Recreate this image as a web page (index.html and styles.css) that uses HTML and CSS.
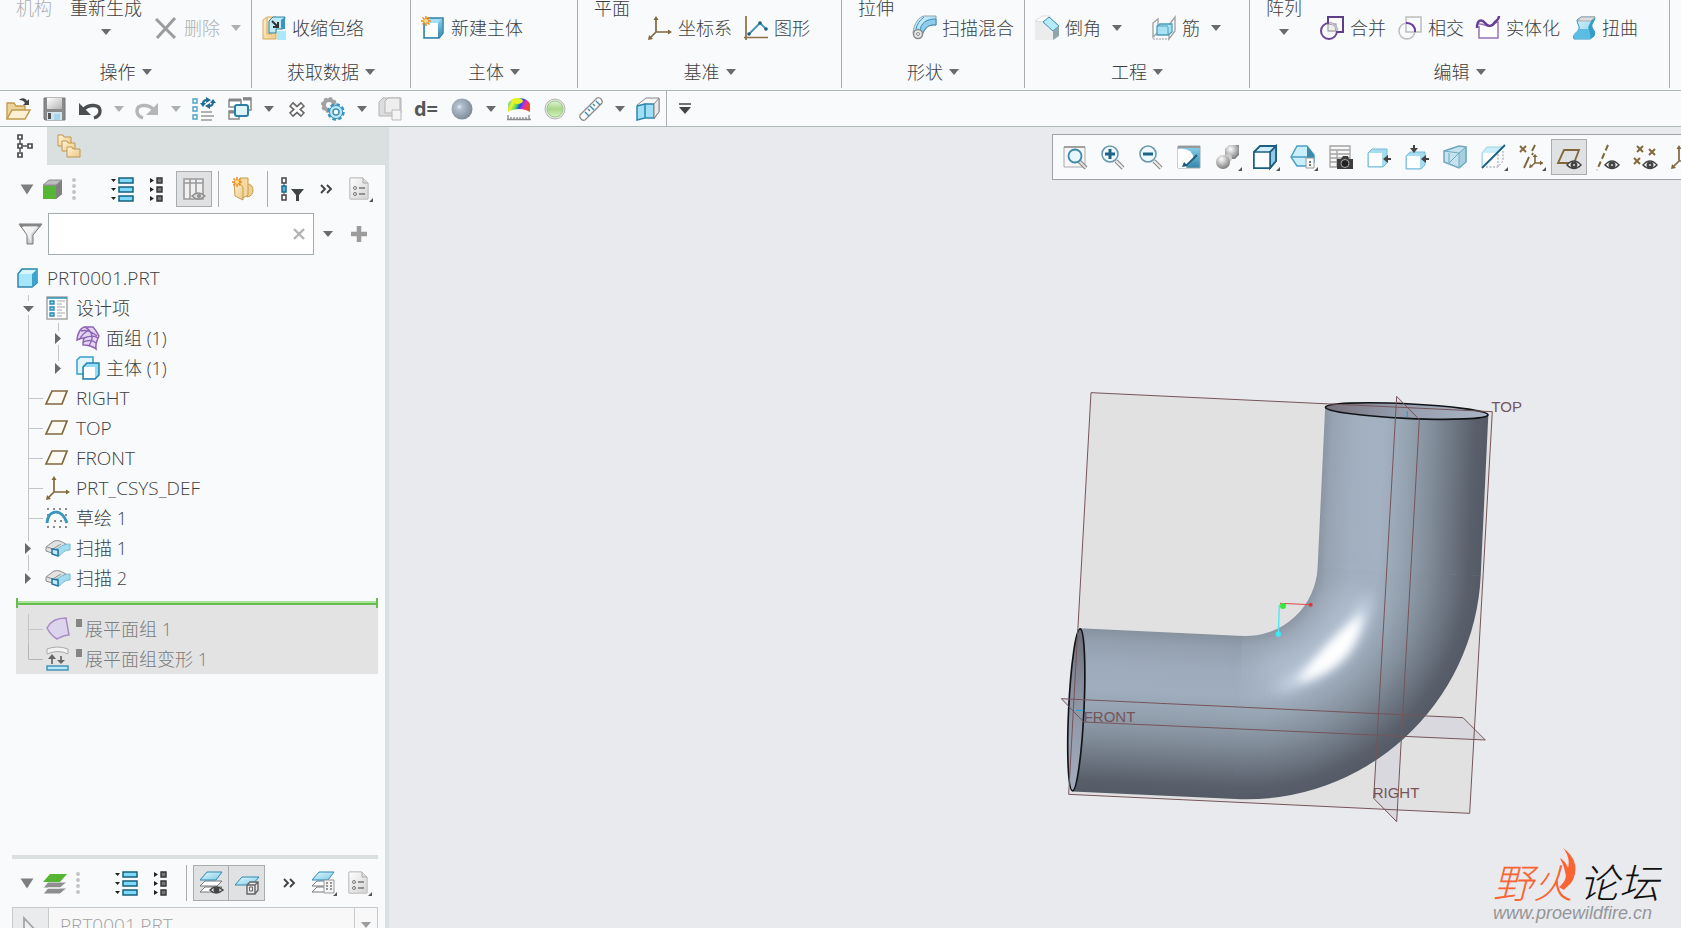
FILE: index.html
```
<!DOCTYPE html>
<html lang="zh-CN">
<head>
    <meta charset="UTF-8">
    <meta name="viewport" content="width=device-width, initial-scale=1.0">
    <title>PRT0001</title>
    <link rel="stylesheet" href="styles.css">
</head>
<body>

    <!-- Icons -->
    <svg class="sprite" width="0" height="0" aria-hidden="true">
        <defs>
            <linearGradient id="gBlue" x1="0" y1="0" x2="1" y2="1"><stop offset="0" stop-color="#e4f8ff"/><stop offset="1" stop-color="#7ccbe8"/></linearGradient>
            <linearGradient id="gSide" x1="0" y1="0" x2="0" y2="1"><stop offset="0" stop-color="#8fd3ec"/><stop offset="1" stop-color="#2f86ad"/></linearGradient>
            <linearGradient id="gTan" x1="0" y1="0" x2="1" y2="1"><stop offset="0" stop-color="#fff3d6"/><stop offset="1" stop-color="#ecc987"/></linearGradient>
            <linearGradient id="gGrey" x1="0" y1="0" x2="1" y2="1"><stop offset="0" stop-color="#ffffff"/><stop offset="1" stop-color="#b4b4b4"/></linearGradient>
            <radialGradient id="gBall" cx=".38" cy=".4" r=".65"><stop offset="0" stop-color="#e6edf5"/><stop offset=".2" stop-color="#b2bfcd"/><stop offset="1" stop-color="#7d8997"/></radialGradient>
            <radialGradient id="gBall2" cx=".4" cy=".3" r=".7"><stop offset="0" stop-color="#fff"/><stop offset="1" stop-color="#7d7d7d"/></radialGradient>
            <linearGradient id="gGreen" x1="0" y1="0" x2="0" y2="1"><stop offset="0" stop-color="#e1f3d3"/><stop offset=".5" stop-color="#a9d68c"/><stop offset="1" stop-color="#d3f2c0"/></linearGradient>
            <linearGradient id="gRain" x1="0" y1="0" x2="1" y2=".3"><stop offset="0" stop-color="#18c0d8"/><stop offset=".3" stop-color="#f7f02a"/><stop offset=".5" stop-color="#3fe05a"/><stop offset=".65" stop-color="#2848e8"/><stop offset=".8" stop-color="#d22ad0"/><stop offset="1" stop-color="#f04a1c"/></linearGradient>
        </defs>

        <symbol id="i-delete" viewBox="0 0 24 24"><path d="M2 3l19 19M21 2L3 22" stroke="#9c9c9c" stroke-width="3" fill="none"/></symbol>
        <symbol id="i-shrink" viewBox="0 0 24 24"><path d="M1 4l4-3h9v22H1z" fill="url(#gTan)" stroke="#d9a957"/><path d="M5 2v16h5" fill="none" stroke="#d9a957"/><path d="M7 5l4-4h12l-2 12h-7v4H7z" fill="#bfeaf8" stroke="#2d84a8"/><path d="M19 4l4-3v12h-4z" fill="#3b96bd"/><path d="M10 5l6 6m0-5v5h-5" stroke="#333" stroke-width="2" fill="none"/><path d="M15 15h9v9h-9z" fill="#a8e8fa"/></symbol>
        <symbol id="i-newbody" viewBox="0 0 24 24"><path d="M3 7l4-5h15v15l-4 5H3z" fill="#a5dff2" stroke="#2d7fa3" stroke-width="1.5"/><path d="M17 7l4-5v15l-4 5z" fill="url(#gSide)"/><path d="M4 7h13v14H4z" fill="#fff"/><path d="M5 0v10M0 5h10M1.500 1.500l7 7M8.500 1.500l-7 7" stroke="#f08a1d" stroke-width="1.500"/><circle cx="5" cy="5" r="2" fill="#ffe08a"/></symbol>
        <symbol id="i-csys" viewBox="0 0 24 24"><path d="M8 3v13h13M8 16l-6 6" stroke="#80683c" stroke-width="1.700" fill="none"/><path d="M5.500 4L8 0l2.500 4zM20 13.500l4 2.500-4 2.500zM0 24l1-5 4 4z" fill="#80683c"/></symbol>
        <symbol id="i-graph" viewBox="0 0 24 24"><path d="M2 0v24M0 21.500h24" stroke="#8a7044" stroke-width="1.700"/><path d="M5 18L16 7l6 6" fill="none" stroke="#3d93b8" stroke-width="1.800"/><circle cx="5" cy="18" r="1.800" fill="#1d5f82"/><circle cx="16" cy="7" r="1.800" fill="#1d5f82"/><circle cx="22" cy="13" r="1.800" fill="#1d5f82"/></symbol>
        <symbol id="i-sweepblend" viewBox="0 0 24 24"><path d="M1 17C2 7 7 1 12 0h12v9c-8 0-10 2-14 10z" fill="url(#gBlue)" stroke="#8ba3ad"/><path d="M24 9c-7-1-11 2-14 10l-2-4C9 7 14 3 24 3z" fill="#8fcdea" stroke="#3b8db5"/><path d="M12 1C8 4 5 8 4 13" fill="none" stroke="#3b8db5"/><circle cx="6" cy="18" r="4.500" fill="#e8e8e8" stroke="#888" stroke-width="1.500"/><circle cx="6" cy="18" r="1.500" fill="#fff" stroke="#888"/></symbol>
        <symbol id="i-chamfer" viewBox="0 0 24 24"><path d="M0 6l7-6h8l9 10v10l-6 4H0z" fill="#ececec"/><path d="M0 5l7-5h8l-6 6z" fill="#fff" stroke="#ddd"/><path d="M8 6l6-5 10 9-6 5z" fill="#b4ecfb" stroke="#3390b5"/><path d="M18 15l6-5v10l-6 4z" fill="#8fa6ad"/></symbol>
        <symbol id="i-rib" viewBox="0 0 24 24"><path d="M1 7l5-4v13l-5 5zM17 9l6-8v14l-6 8z" fill="#fafafa" stroke="#a3a3a3" stroke-width="1.400"/><path d="M1 23h16" stroke="#999" stroke-dasharray="2 1"/><path d="M5 10l3-2h12v8l-4 3H5z" fill="#a7e2f5" stroke="#4f9cba" stroke-width="1.300"/><path d="M16 11v8M5 10h11" stroke="#4f9cba"/></symbol>
        <symbol id="i-merge" viewBox="0 0 24 24"><path d="M8 8v7h8V8z" fill="#eee" stroke="#aaa" stroke-width="1.300"/><path d="M8 7V1h15v15h-6" fill="none" stroke="#5f3d87" stroke-width="2"/><circle cx="9" cy="15" r="8" fill="none" stroke="#6b4897" stroke-width="2"/><path d="M9 7a8 8 0 0 1 8 8" fill="none" stroke="#c9c6cc" stroke-width="2"/></symbol>
        <symbol id="i-intersect" viewBox="0 0 24 24"><path d="M8 8V1h15v15H8z" fill="none" stroke="#bdbdbd" stroke-width="1.500"/><circle cx="9" cy="15" r="8" fill="none" stroke="#bdbdbd" stroke-width="1.500"/><path d="M8 7a8 8 0 0 1 9 9" fill="none" stroke="#6a3f9a" stroke-width="2"/></symbol>
        <symbol id="i-solidify" viewBox="0 0 24 24"><path d="M3 10v12h19V6c-3 0-6 4-9 4S8 8 3 8" fill="#fff" stroke="#9673bb" stroke-width="1.500"/><path d="M1 12C1 3 6 3 9 7s7 4 10-1c2-2 4-2 4-6" fill="none" stroke="#663e94" stroke-width="2.500"/></symbol>
        <symbol id="i-warp" viewBox="0 0 24 24"><path d="M5 4l4-3h14c0 4-5 6-3 10 1 3 4 4 2 9l-4 3H2c-2-5 4-7 5-10S5 8 5 4z" fill="url(#gBlue)" stroke="#2e93bd"/><path d="M2 22c-1-4 4-6 5-9h12c0 3 2 5 1 8l-2 2H3z" fill="#5dbce2"/><path d="M6 5l3-4h14l-4 4z" fill="#ddd" stroke="#aaa"/><path d="M19 5c-1 4-4 5-2 9 1 3 2 5 1 9l4-3c2-5-2-6-2-9s3-6 3-9z" fill="#319dcb"/></symbol>

        <symbol id="i-open" viewBox="0 0 24 24"><path d="M1 22V6h7l2 3h9v4" fill="#ecd39a" stroke="#c19a4c" stroke-width="1.300"/><path d="M1 22l5-9h18l-5 9z" fill="#fdf1d3" stroke="#c19a4c" stroke-width="1.500"/><path d="M13 3c3-3 7-2 8 1l2-2v6h-6l2-2c-1-2-3-3-6-3z" fill="#444"/></symbol>
        <symbol id="i-save" viewBox="0 0 24 24"><path d="M2 1h21v22H3l-1-1z" fill="#8a8a8a" stroke="#777"/><path d="M5 1h15v11H5z" fill="url(#gGrey)"/><path d="M5 15h15v8H5z" fill="#cfe5f1"/><path d="M6 16h3v6H6z" fill="#555"/><path d="M12 17h6v6h-6z" fill="#a9d4ea"/></symbol>
        <symbol id="i-undo" viewBox="0 0 24 24"><path d="M6 12c5-5 16-5 16 2 0 4-3 6-6 7" fill="none" stroke="#4b4f52" stroke-width="3.400"/><path d="M1 6v12h12z" fill="#4b4f52"/></symbol>
        <symbol id="i-redo" viewBox="0 0 24 24"><path d="M18 12C13 7 2 7 2 14c0 4 3 6 6 7" fill="none" stroke="#b4b6b8" stroke-width="3.400"/><path d="M23 6v12H11z" fill="#b4b6b8"/></symbol>
        <symbol id="i-regen" viewBox="0 0 24 24"><path d="M1 2h4v4H1zM1 10h4v4H1zM1 18h4v4H1z" fill="#fff" stroke="#4aa3c8" stroke-width="1.400"/><path d="M9 15h11M9 19h13M9 23h11" stroke="#999" stroke-width="1.700"/><path d="M11 7c0-3 2-4 4-4M21 5c0 3-2 4-4 4" stroke="#1e6d93" stroke-width="2.200" fill="none"/><path d="M14 0l5 3-5 3zM18 6l-5 3 5 3zM8 6h6l-3 4zM18 6h6l-3-4z" fill="#1e6d93"/></symbol>
        <symbol id="i-windows" viewBox="0 0 24 24"><path d="M1 3h12v7H1zM15 1h8v12h-8M1 14h10v8H1z" fill="#fff" stroke="#888" stroke-width="1.500"/><path d="M1 3h12M15 2h8M1 15h10" stroke="#888" stroke-width="3"/><rect x="7" y="8" width="13" height="11" rx="2" fill="#dff5fc" stroke="#2b7fa6" stroke-width="2"/></symbol>
        <symbol id="i-close" viewBox="0 0 24 24"><path d="M6 7l12 11M18 7L6 18" stroke="#666" stroke-width="6"/><path d="M7 8l10 9M17 8L7 17" stroke="#fff" stroke-width="2.800"/></symbol>
        <symbol id="i-gears" viewBox="0 0 24 24"><circle cx="8" cy="8" r="5" fill="none" stroke="#a2a2a2" stroke-width="4"/><circle cx="8" cy="8" r="7" fill="none" stroke="#a2a2a2" stroke-width="2" stroke-dasharray="3 2.500"/><circle cx="15" cy="15" r="7.500" fill="#bdeafa" stroke="#3c92ba" stroke-width="2.500" stroke-dasharray="3.500 2.400"/><circle cx="15" cy="15" r="6.500" fill="#bdeafa" stroke="#3c92ba"/><circle cx="15" cy="15" r="3" fill="#fff" stroke="#3c92ba" stroke-width="1.500"/></symbol>
        <symbol id="i-copygrey" viewBox="0 0 24 24"><path d="M1 5l4-4h18v15h-3v3H1z" fill="#dcdddd" stroke="#b3b3b3"/><path d="M7 4l3-3h12v12l-3 3H7z" fill="#eee" stroke="#b3b3b3"/><path d="M14 13h9v10h-9z" fill="#f4f4f4" stroke="#b8b8b8"/></symbol>
        <symbol id="i-ball" viewBox="0 0 24 24"><circle cx="12" cy="12" r="10.500" fill="url(#gBall)"/></symbol>
        <symbol id="i-rainbow" viewBox="0 0 24 24"><path d="M1 15V7c3-8 19-8 22 0v8c-6-4-16-4-22 0z" fill="url(#gRain)"/><ellipse cx="10" cy="4" rx="6" ry="3" fill="#e6f32a"/><path d="M0 22.500h24M1 18v4M4 20v2M7 20v2M10 20v2M13 20v2M16 20v2M19 20v2M22 18v4" stroke="#8a8a8a" stroke-width="1.300"/></symbol>
        <symbol id="i-green" viewBox="0 0 24 24"><circle cx="12" cy="12" r="10" fill="#e8e8e8" stroke="#b5b5b5"/><circle cx="12" cy="12" r="8" fill="url(#gGreen)" stroke="#9cc986"/></symbol>
        <symbol id="i-ruler" viewBox="0 0 24 24"><path d="M1 18L18 1q2-1 4 1t1 4L6 23q-2 1-4-1t-1-4z" fill="#fcfcfc" stroke="#8d8d8d" stroke-width="1.300"/><path d="M6 15l4 4M9 12l2 2M11 9l4 4M14 7l2 2M17 4l4 4" stroke="#3a8eb5" stroke-width="1.400"/></symbol>
        <symbol id="i-sections" viewBox="0 0 24 24"><path d="M1 8l9-7h13v14l-5 7" fill="#f6f6f6" stroke="#888"/><path d="M1 9l8-2v14l-8 2zM9 7h9v14H9z" fill="#9fe0f7" stroke="#2b86ae" stroke-width="1.500"/><path d="M18 7l5-6v14l-5 6z" fill="#e9e9e9" stroke="#888"/></symbol>
        <symbol id="i-more" viewBox="0 0 24 24"><path d="M6 7h12" stroke="#444" stroke-width="1.500"/><path d="M6 10h12l-6 7z" fill="#444"/></symbol>

        <symbol id="i-tree" viewBox="0 0 24 24"><path d="M6 6v12M9 12h4" stroke="#555" stroke-width="1.500"/><path d="M4 1h4v4H4zM4 10h4v4H4zM14 10h4v4h-4zM4 19h4v4H4z" fill="#fff" stroke="#4a4a4a" stroke-width="1.700"/></symbol>
        <symbol id="i-folders" viewBox="0 0 24 24"><g fill="url(#gTan)" stroke="#bd9750"><path d="M1 1h5l1 2h7v9H1z"/><path d="M5 7h5l1 2h7v8H5z"/><path d="M10 13h5l1 2h7v8H10z"/></g></symbol>
        <symbol id="i-cube" viewBox="0 0 24 24"><path d="M1 9l6-6h13v14l-6 5" fill="#8e8e8e"/><path d="M1 8l6-5h13l-6 5z" fill="#bdbdbd" stroke="#8e8e8e"/><path d="M1 9h13v13H1z" fill="#55b535"/><path d="M14 9l6-6v14l-6 5z" fill="#808080"/></symbol>
        <symbol id="i-expand" viewBox="0 0 24 24"><path d="M9 1h14v5H9zM9 10h14v5H9zM9 19h14v5H9z" fill="#7ed9fb" stroke="#17607f" stroke-width="1.500"/><path d="M1 2h5L3.500 5zM1 11h5l-2.500 3zM1 20h5l-2.500 3z" fill="#222"/></symbol>
        <symbol id="i-collapse" viewBox="0 0 24 24"><path d="M11 1h5v5h-5zM11 10h5v5h-5zM11 19h5v5h-5z" fill="#777" stroke="#333" stroke-width="1.400"/><path d="M4 1v5l4-2.500zM4 10v5l4-2.500zM4 19v5l4-2.500z" fill="#222"/></symbol>
        <symbol id="i-columns" viewBox="0 0 24 24"><path d="M2 2h19v20H2zM2 6h19M8 2v20M14 2v20" fill="#f0f0f0" stroke="#9a9a9a" stroke-width="1.600"/><path d="M10 19q6-6 13 0-7 6-13 0z" fill="#dcdcdc" stroke="#8f8f8f" stroke-width="1.500"/><circle cx="17" cy="19" r="2" fill="#8f8f8f"/></symbol>
        <symbol id="i-newgroup" viewBox="0 0 24 24"><path d="M16 7q6 0 6 6t-6 7z" fill="#efcf91" stroke="#c79c4b"/><path d="M9 1h8v17l-5 3-3-3z" fill="#f4d9a0" stroke="#c79c4b"/><path d="M3 5l6 2 3 3v13L4 19z" fill="url(#gTan)" stroke="#c79c4b"/><path d="M6 0v10M1 5h10M2.500 1.500l7 7M9.500 1.500l-7 7" stroke="#f08a1d" stroke-width="1.500"/><circle cx="6" cy="5" r="2" fill="#ffe08a"/></symbol>
        <symbol id="i-treefilter" viewBox="0 0 24 24"><path d="M4 5v14" stroke="#555"/><path d="M2 1h4v5H2zM2 18h4v5H2z" fill="#fff" stroke="#444" stroke-width="1.500"/><path d="M2 9h4v6H2z" fill="#58b5dc" stroke="#1d6a8f" stroke-width="1.500"/><path d="M11 12h13l-5 6v6h-3v-6z" fill="#444"/></symbol>
        <symbol id="i-chevrons" viewBox="0 0 24 24"><path d="M7 8l4 4-4 4M13 8l4 4-4 4" fill="none" stroke="#444" stroke-width="1.900"/></symbol>
        <symbol id="i-doc" viewBox="0 0 24 24"><path d="M2 1h13l5 5v16H2z" fill="url(#gGrey)" stroke="#a0a0a0"/><path d="M2 1h13l5 5v16H2z" fill="#fff" fill-opacity=".4"/><path d="M15 1v5h5" fill="#ddd" stroke="#aaa"/><circle cx="7" cy="11" r="1.500" fill="none" stroke="#777"/><circle cx="7" cy="17" r="1.500" fill="none" stroke="#777"/><path d="M11 11h6M11 17h6" stroke="#777" stroke-width="1.300"/><path d="M25 21v4h-4z" fill="#555"/></symbol>
        <symbol id="i-funnel" viewBox="0 0 24 24"><path d="M1 2h23l-9 11v9H9v-9z" fill="url(#gGrey)" stroke="#777"/><path d="M1 2h23l-2 3H3z" fill="#868686"/><path d="M5 4h15l-7 8v9" fill="#fff" fill-opacity=".6"/></symbol>
        <symbol id="i-x" viewBox="0 0 24 24"><path d="M7 7l10 10M17 7L7 17" stroke="#b3b3b3" stroke-width="2.400"/></symbol>
        <symbol id="i-plus" viewBox="0 0 24 24"><path d="M12 4v16M4 12h16" stroke="#9c9c9c" stroke-width="4.500"/></symbol>
        <symbol id="i-caret" viewBox="0 0 24 24"><path d="M5 7h14l-7 11z" fill="#7e7e7e"/></symbol>

        <symbol id="i-part" viewBox="0 0 24 24"><path d="M1 8l4-5h15v14l-5 4H1z" fill="#a6e6fa" stroke="#2f85ab" stroke-width="1.500"/><path d="M15 8l5-5v14l-5 4z" fill="#3fa3cf"/><path d="M2 8l4-4h13l-4 4z" fill="#d8f5fd"/></symbol>
        <symbol id="i-items" viewBox="0 0 24 24"><path d="M1 1h20v22H1z" fill="#fff" stroke="#a5a5a5" stroke-width="1.500"/><path d="M1 2h20" stroke="#3793bb" stroke-width="1.600"/><path d="M4 5h4v3H4zM4 11h4v3H4zM4 17h4v3H4z" fill="#9edcf2" stroke="#2687b3" stroke-width="1.300"/><path d="M11 5h8M11 8h5M11 11h8M11 14h5M11 17h8M11 20h5" stroke="#a5a5a5"/></symbol>
        <symbol id="i-quilt" viewBox="0 0 24 24"><path d="M1 14C1 8 5 1 9 1h8c3 3 5 7 6 9-2 4-4 8-3 13-5-4-9-4-13-4 0-3 0-5 1-7-3 0-5 1-7 2z" fill="#e3d5f1" stroke="#8e65b4" stroke-width="1.500"/><path d="M5 5c6-2 11 1 16 5M9 1c4 2 6 5 7 9s-2 7-3 10M8 12c5-2 10-3 14 0M7 16c5-2 10-2 13 1M13 4c-5 3-8 6-9 9" fill="none" stroke="#8e65b4" stroke-width="1.400"/></symbol>
        <symbol id="i-bodies" viewBox="0 0 24 24"><path d="M1 4l3-3h13v14l-3 3H1z" fill="#dff6fd" stroke="#3a9dc6" stroke-width="1.500"/><path d="M7 11l4-4h12v12l-4 4H7z" fill="#8fdcf5" stroke="#2580a8" stroke-width="1.500"/><path d="M8 11h11v11H8z" fill="#fff"/></symbol>
        <symbol id="i-plane" viewBox="0 0 24 24"><path d="M6 5h15l-5 13H0z" fill="#fcfaf5" stroke="#80683c" stroke-width="1.700"/></symbol>
        <symbol id="i-sketch" viewBox="0 0 24 24"><g fill="#8c8c8c"><path d="M1 2h2v2H1zM7 2h2v2H7zM13 2h2v2h-2zM19 2h2v2h-2zM1 8h2v2H1zM19 8h2v2h-2zM8 14h2v2H8zM14 14h2v2h-2zM1 20h2v2H1zM7 20h2v2H7zM13 20h2v2h-2zM19 20h2v2h-2z"/></g><path d="M1 17C2 3 16 2 21 17" fill="none" stroke="#3796bd" stroke-width="3"/></symbol>
        <symbol id="i-sweep" viewBox="0 0 24 24"><path d="M0 11l8-6q4-1 6 0l6 3-6 4-8 5-6-2z" fill="#e2e2e2" stroke="#8d8d8d"/><path d="M1 11l6 2 8-5" fill="none" stroke="#8d8d8d"/><path d="M10 13c4-1 6-5 14-5v6c-6 0-7 3-11 6l-1-6z" fill="#a3dbef" stroke="#76b8d2"/><path d="M6 13l6 1v6l-6-2z" fill="#c2ecf9" stroke="#24749a" stroke-width="1.500"/></symbol>
        <symbol id="i-flatten" viewBox="0 0 24 24"><path d="M1 11C4 5 9 1 20 1l3 17c-5 0-8 2-12 4C6 19 3 15 1 11z" fill="#dcd4ec" stroke="#a88bc6" stroke-width="1.500"/></symbol>
        <symbol id="i-deform" viewBox="0 0 24 24"><path d="M1 7V2q10-4 21 0v5q-10-5-21 0z" fill="#f2f2f2" stroke="#aaa"/><path d="M6 17V10M15 9v7" stroke="#666" stroke-width="1.700"/><path d="M2 12l4-5 4 5zM11 13l4 4 4-4z" fill="#666"/><path d="M1 19h21v4H1z" fill="#b5e8f9" stroke="#4792b3" stroke-width="1.500"/></symbol>

        <!-- Tree connector lines -->
        <symbol id="l-tee" viewBox="0 0 30 30"><path d="M15.500 0v30M15 15.500h15" stroke="#c3c6c8" fill="none"/></symbol>
        <symbol id="l-end" viewBox="0 0 30 30"><path d="M15.500 0v15.500h14.500" stroke="#b5b5b5" fill="none"/></symbol>
        <symbol id="l-line" viewBox="0 0 30 30"><path d="M15.500 0v30" stroke="#c3c6c8" fill="none"/></symbol>
        <symbol id="l-open" viewBox="0 0 30 30"><path d="M15.500 2v6M15.500 22v8" stroke="#c3c6c8"/><path d="M10 13h11l-5.500 6z" fill="#6a6a6a"/></symbol>
        <symbol id="l-closed" viewBox="0 0 30 30"><path d="M15.500 0v8M15.500 22v8" stroke="#c3c6c8"/><path d="M12 10v11l6-5.500z" fill="#6a6a6a"/></symbol>
        <symbol id="l-last" viewBox="0 0 30 30"><path d="M15.500 0v8" stroke="#c3c6c8"/><path d="M12 10v11l6-5.500z" fill="#6a6a6a"/></symbol>

        <symbol id="i-layers" viewBox="0 0 24 24"><path d="M1 23l5-6h19l-7 6zM1 17l5-6h19l-7 6z" fill="#8e8e8e" stroke="#f7f9fb"/><path d="M1 11l7-8h17l-7 8z" fill="#55b535"/></symbol>
        <symbol id="i-layereye" viewBox="0 0 24 24"><path d="M1 21l5-5h17l-5 5zM1 15l5-5h17l-5 5z" fill="#fff" stroke="#777"/><path d="M1 9l7-8h15l-6 8z" fill="url(#gBlue)" stroke="#3188ae"/><path d="M11 19q6-6 13 0-7 6-13 0z" fill="#eee" stroke="#444" stroke-width="1.500"/><circle cx="17.500" cy="19" r="3" fill="#444"/></symbol>
        <symbol id="i-layerbox" viewBox="0 0 24 24"><path d="M0 14l7-8h17l-7 8z" fill="url(#gBlue)" stroke="#3188ae"/><path d="M12 14l3-3h8v8l-3 4h-8zM12 14h8v9M20 14l3-3" fill="#e8e8e8" stroke="#666" stroke-width="1.400"/><path d="M14.500 16h3v4h-3z" fill="none" stroke="#666"/></symbol>
        <symbol id="i-layerlist" viewBox="0 0 24 24"><path d="M1 21l5-5h17l-5 5zM1 15l5-5h17l-5 5z" fill="#fff" stroke="#777"/><path d="M1 9l7-8h15l-6 8z" fill="url(#gBlue)" stroke="#3188ae"/><path d="M13 9h10v13H13z" fill="#f5f5f5" stroke="#999"/><path d="M15 12h2m2 0h2M15 15h2m2 0h2M15 18h2m2 0h2" stroke="#777" stroke-width="1.500"/><path d="M26 21v4h-4z" fill="#555"/></symbol>
        <symbol id="i-pick" viewBox="0 0 24 24"><path d="M5 2v19l4-4 3 7 3-1-3-7h6z" fill="#eef0f2" stroke="#a5a5a5" stroke-width="1.800"/></symbol>

        <symbol id="i-zoomfit" viewBox="0 0 24 24"><path d="M1 2h21v20H1z" fill="#f7f7f7" stroke="#aaa"/><path d="M1 2h21" stroke="#999" stroke-width="1.700"/><path d="M16 16l7 7" stroke="#888" stroke-width="4"/><path d="M16 16l7 7" stroke="#ddd" stroke-width="2"/><circle cx="12" cy="11" r="6.500" fill="#e6f6fc" stroke="#3b88aa" stroke-width="1.800"/></symbol>
        <symbol id="i-zoomin" viewBox="0 0 24 24"><path d="M15 16l7 7" stroke="#888" stroke-width="4"/><path d="M15 16l7 7" stroke="#eee" stroke-width="2"/><circle cx="9" cy="9" r="8" fill="#effaff" stroke="#6d99ac" stroke-width="1.600"/><path d="M9 4v10M4 9h10" stroke="#1c6488" stroke-width="3"/></symbol>
        <symbol id="i-zoomout" viewBox="0 0 24 24"><path d="M15 16l7 7" stroke="#888" stroke-width="4"/><path d="M15 16l7 7" stroke="#eee" stroke-width="2"/><circle cx="9" cy="9" r="8" fill="#effaff" stroke="#6d99ac" stroke-width="1.600"/><path d="M4 9h10" stroke="#1c6488" stroke-width="3"/></symbol>
        <symbol id="i-repaint" viewBox="0 0 24 24"><path d="M1 1h22v22H1z" fill="url(#gSide)" stroke="#a3a3a3"/><path d="M1 4q14-2 16 10L9 23H1z" fill="#fff"/><path d="M1 2h22" stroke="#999" stroke-width="2"/><path d="M20 10L9 21" stroke="#1b5d7f" stroke-width="2"/><path d="M5 22l2-5 4 4z" fill="#1b5d7f"/></symbol>
        <symbol id="i-render" viewBox="0 0 24 24"><path d="M10 4l4-4h10v10l-4 4H10z" fill="url(#gBall2)"/><circle cx="13" cy="13" r="4" fill="#ccc"/><circle cx="8" cy="17" r="7" fill="url(#gBall2)"/></symbol>
        <symbol id="i-shade" viewBox="0 0 24 24"><path d="M1 7l6-6h16v15l-6 7H1z" fill="#cdeefa" stroke="#1c5f80" stroke-width="1.800"/><path d="M17 7l6-6v15l-6 7z" fill="#8fcbe2" stroke="#1c5f80" stroke-width="1.800"/><path d="M1 7h16v16H1z" fill="#fff" stroke="#1c5f80" stroke-width="1.500"/></symbol>
        <symbol id="i-saved" viewBox="0 0 24 24"><path d="M0 12L6 1h10l7 9v7l-7 4H6z" fill="#c9effb" stroke="#4b9fc2" stroke-width="1.500"/><path d="M16 1l7 9v6h-7z" fill="#3d89ab"/><path d="M0 12h16" stroke="#4b9fc2" stroke-width="1.500"/><path d="M15 13h8v10h-8z" fill="#fafafa" stroke="#999"/><path d="M18 16h2v2h-2zM18 19h2v2h-2z" fill="#777"/></symbol>
        <symbol id="i-camera" viewBox="0 0 24 24"><path d="M1 1h20v21H1zM1 5h20M1 9h20M1 13h20M1 17h20M8 5v17" fill="#f7f7f7" stroke="#a3a3a3" stroke-width="1.300"/><path d="M8 14h4l2-3h5l1 3h4v10H8z" fill="#3d3d3d"/><circle cx="16" cy="18.500" r="4" fill="#222" stroke="#aaa"/></symbol>
        <symbol id="i-boxleft" viewBox="0 0 24 24"><path d="M1 8l4-4h15v14l-4 4H1z" fill="#a5dcf0" stroke="#76bcd8"/><path d="M2 8h13v13H2z" fill="#fff"/><path d="M18 14h6" stroke="#444" stroke-width="2"/><path d="M16 14l5-4v8z" fill="#444"/></symbol>
        <symbol id="i-boxboth" viewBox="0 0 24 24"><path d="M1 11l4-4h15v13l-4 4H1z" fill="#a5dcf0" stroke="#76bcd8"/><path d="M2 11h13v12H2z" fill="#fff"/><path d="M18 14h6M9 0v5" stroke="#444" stroke-width="2"/><path d="M16 14l5-4v8zM9 8L5 3h8z" fill="#444"/></symbol>
        <symbol id="i-persp" viewBox="0 0 24 24"><path d="M1 6l15-5 7 1v15l-7 6-15-6z" fill="#c5e3ee" stroke="#70a8be" stroke-width="1.500"/><path d="M16 8l7-6v15l-7 6zM1 6l15 2M6 8v10M16 8L6 18" fill="#8fc0d4" fill-opacity=".6" stroke="#70a8be"/></symbol>
        <symbol id="i-section" viewBox="0 0 24 24"><path d="M1 8l5-6h17L1 22z" fill="#c9eefa" stroke="#9cd0e3"/><path d="M2 8h13L2 20z" fill="#fff"/><path d="M5 22h12l5-6V6M17 9v13" fill="none" stroke="#999" stroke-dasharray="2 1.500"/><path d="M1 23L24 0" stroke="#1c5f80" stroke-width="1.800"/></symbol>
        <symbol id="i-datum" viewBox="0 0 24 24"><path d="M1 1l6 6M7 1L1 7M16 0l-3 6M10 12L5 23M14 8l-1 2" stroke="#80683c" stroke-width="1.900"/><path d="M16 10v8h8M16 18l-5 4" stroke="#80683c" stroke-width="1.600" fill="none"/><path d="M13.500 12l2.500-3 2.500 3zM21 15.500l3 2.500-3 2.500zM10 23l1-4 3 3z" fill="#80683c"/></symbol>
        <symbol id="i-eye" viewBox="0 0 24 24"><path d="M10 20q7-8 14 0-7 7-14 0z" fill="#fff" stroke="#444" stroke-width="1.500"/><circle cx="17" cy="20" r="3.500" fill="#444"/><circle cx="17" cy="20" r="1" fill="#ddd"/></symbol>
        <symbol id="i-planeeye" viewBox="0 0 24 24"><path d="M7 5h15l-5 13H1z" fill="none" stroke="#80683c" stroke-width="1.800"/><use href="#i-eye" width="24" height="24"/></symbol>
        <symbol id="i-axiseye" viewBox="0 0 24 24"><path d="M13 0L2 25" stroke="#80683c" stroke-width="2" stroke-dasharray="6 3"/><use href="#i-eye" width="24" height="24"/></symbol>
        <symbol id="i-pointeye" viewBox="0 0 24 24"><path d="M4 1l6 6M10 1L4 7M16 4l6 6M22 4l-6 6M1 13l6 6M7 13l-6 6" stroke="#80683c" stroke-width="2"/><use href="#i-eye" width="24" height="24"/></symbol>
        <symbol id="i-corner" viewBox="0 0 6 6"><path d="M5 1v4H1z" fill="#555"/></symbol>
    </svg>

    <div class="app">

        <!-- Ribbon -->
        <header class="ribbon">
            <section class="group">
                <div class="group-body starts-big">
                    <button class="big off" disabled>机构</button>
                    <button class="big last">重新生成<i class="caret"></i></button>
                    <button class="cmd off" disabled><svg><use href="#i-delete"/></svg>删除<i class="caret"></i></button>
                </div>
                <button class="group-title">操作<i class="caret"></i></button>
            </section>
            <section class="group group-data">
                <div class="group-body">
                    <button class="cmd"><svg><use href="#i-shrink"/></svg>收缩包络</button>
                </div>
                <button class="group-title">获取数据<i class="caret"></i></button>
            </section>
            <section class="group group-body-ops">
                <div class="group-body">
                    <button class="cmd"><svg><use href="#i-newbody"/></svg>新建主体</button>
                </div>
                <button class="group-title">主体<i class="caret"></i></button>
            </section>
            <section class="group group-datum">
                <div class="group-body starts-big">
                    <button class="big">平面</button>
                    <button class="cmd"><svg><use href="#i-csys"/></svg>坐标系</button>
                    <button class="cmd"><svg><use href="#i-graph"/></svg>图形</button>
                </div>
                <button class="group-title">基准<i class="caret"></i></button>
            </section>
            <section class="group">
                <div class="group-body starts-big">
                    <button class="big">拉伸</button>
                    <button class="cmd"><svg><use href="#i-sweepblend"/></svg>扫描混合</button>
                </div>
                <button class="group-title">形状<i class="caret"></i></button>
            </section>
            <section class="group group-eng">
                <div class="group-body spread">
                    <button class="cmd"><svg><use href="#i-chamfer"/></svg>倒角<i class="caret"></i></button>
                    <button class="cmd"><svg><use href="#i-rib"/></svg>筋<i class="caret"></i></button>
                </div>
                <button class="group-title">工程<i class="caret"></i></button>
            </section>
            <section class="group group-edit">
                <div class="group-body starts-big">
                    <button class="big">阵列<i class="caret"></i></button>
                    <button class="cmd"><svg><use href="#i-merge"/></svg>合并</button>
                    <button class="cmd"><svg><use href="#i-intersect"/></svg>相交</button>
                    <button class="cmd"><svg><use href="#i-solidify"/></svg>实体化</button>
                    <button class="cmd"><svg><use href="#i-warp"/></svg>扭曲</button>
                </div>
                <button class="group-title">编辑<i class="caret"></i></button>
            </section>
        </header>

        <!-- Quick access bar -->
        <div class="quickbar">
            <button class="tool" aria-label="打开"><svg><use href="#i-open"/></svg></button>
            <button class="tool" aria-label="保存"><svg><use href="#i-save"/></svg></button>
            <button class="tool" aria-label="撤消"><svg><use href="#i-undo"/></svg></button>
            <button class="drop off" aria-label="撤消列表"><i class="caret"></i></button>
            <button class="tool" aria-label="重做"><svg><use href="#i-redo"/></svg></button>
            <button class="drop off" aria-label="重做列表"><i class="caret"></i></button>
            <button class="tool" aria-label="重新生成"><svg><use href="#i-regen"/></svg></button>
            <button class="tool" aria-label="窗口"><svg><use href="#i-windows"/></svg></button>
            <button class="drop" aria-label="窗口列表"><i class="caret"></i></button>
            <button class="tool" aria-label="关闭"><svg><use href="#i-close"/></svg></button>
            <button class="tool" aria-label="设置"><svg><use href="#i-gears"/></svg></button>
            <button class="drop" aria-label="设置列表"><i class="caret"></i></button>
            <button class="tool" aria-label="复制"><svg><use href="#i-copygrey"/></svg></button>
            <button class="tool dim">d=</button>
            <button class="tool" aria-label="外观"><svg><use href="#i-ball"/></svg></button>
            <button class="drop" aria-label="外观列表"><i class="caret"></i></button>
            <button class="tool" aria-label="着色曲率"><svg><use href="#i-rainbow"/></svg></button>
            <button class="tool" aria-label="状态"><svg><use href="#i-green"/></svg></button>
            <button class="tool" aria-label="测量"><svg><use href="#i-ruler"/></svg></button>
            <button class="drop" aria-label="测量列表"><i class="caret"></i></button>
            <button class="tool" aria-label="截面"><svg><use href="#i-sections"/></svg></button>
            <span class="quick-sep"></span>
            <button class="tool" aria-label="更多"><svg><use href="#i-more"/></svg></button>
        </div>

        <div class="workspace">

            <!-- Model tree -->
            <aside class="sidebar">
                <div class="tabs">
                    <button class="tab active" aria-label="模型树"><svg><use href="#i-tree"/></svg></button>
                    <button class="tab" aria-label="文件夹"><svg><use href="#i-folders"/></svg></button>
                </div>

                <div class="panel-tools">
                    <button class="tiny" aria-label="折叠"><svg><use href="#i-caret"/></svg></button>
                    <button class="tool" aria-label="模型"><svg><use href="#i-cube"/></svg></button>
                    <span class="grip"><b></b><b></b><b></b><b></b></span>
                    <button class="tool" aria-label="全部展开"><svg><use href="#i-expand"/></svg></button>
                    <button class="tool" aria-label="全部收起"><svg><use href="#i-collapse"/></svg></button>
                    <button class="tool pressed" aria-label="树列"><svg><use href="#i-columns"/></svg></button>
                    <span class="sep"></span>
                    <button class="tool" aria-label="新建组"><svg><use href="#i-newgroup"/></svg></button>
                    <span class="sep"></span>
                    <button class="tool" aria-label="树过滤器"><svg><use href="#i-treefilter"/></svg></button>
                    <button class="chev" aria-label="更多"><svg><use href="#i-chevrons"/></svg></button>
                    <button class="tool" aria-label="设置"><svg><use href="#i-doc"/></svg></button>
                </div>

                <div class="search">
                    <label for="treeSearch" aria-label="过滤"><svg><use href="#i-funnel"/></svg></label>
                    <div class="search-box">
                        <input type="text" id="treeSearch">
                        <button aria-label="清除"><svg><use href="#i-x"/></svg></button>
                    </div>
                    <button class="drop" aria-label="过滤列表"><i class="caret"></i></button>
                    <button class="tool" aria-label="添加"><svg><use href="#i-plus"/></svg></button>
                </div>

                <div class="tree-wrap">
                    <ul class="tree">
                        <li class="name"><svg class="icon"><use href="#i-part"/></svg>PRT0001.PRT</li>
                        <li><svg class="line"><use href="#l-open"/></svg><svg class="icon"><use href="#i-items"/></svg>设计项</li>
                        <li><svg class="line"><use href="#l-line"/></svg><svg class="line"><use href="#l-closed"/></svg><svg class="icon"><use href="#i-quilt"/></svg>面组 (1)</li>
                        <li><svg class="line"><use href="#l-line"/></svg><svg class="line"><use href="#l-last"/></svg><svg class="icon"><use href="#i-bodies"/></svg>主体 (1)</li>
                        <li class="name"><svg class="line"><use href="#l-tee"/></svg><svg class="icon"><use href="#i-plane"/></svg>RIGHT</li>
                        <li class="name"><svg class="line"><use href="#l-tee"/></svg><svg class="icon"><use href="#i-plane"/></svg>TOP</li>
                        <li class="name"><svg class="line"><use href="#l-tee"/></svg><svg class="icon"><use href="#i-plane"/></svg>FRONT</li>
                        <li class="name"><svg class="line"><use href="#l-tee"/></svg><svg class="icon"><use href="#i-csys"/></svg>PRT_CSYS_DEF</li>
                        <li><svg class="line"><use href="#l-tee"/></svg><svg class="icon"><use href="#i-sketch"/></svg>草绘 1</li>
                        <li><svg class="line"><use href="#l-closed"/></svg><svg class="icon"><use href="#i-sweep"/></svg>扫描 1</li>
                        <li><svg class="line"><use href="#l-last"/></svg><svg class="icon"><use href="#i-sweep"/></svg>扫描 2</li>
                    </ul>
                    <div class="insert-bar"></div>
                    <ul class="tree suppressed">
                        <li><svg class="line"><use href="#l-tee"/></svg><svg class="icon"><use href="#i-flatten"/></svg><span class="mark"></span>展平面组 1</li>
                        <li><svg class="line"><use href="#l-end"/></svg><svg class="icon"><use href="#i-deform"/></svg><span class="mark"></span>展平面组变形 1</li>
                    </ul>
                </div>

                <!-- Layer tree -->
                <div class="layers">
                    <div class="splitter"></div>
                    <div class="panel-tools">
                        <button class="tiny" aria-label="折叠"><svg><use href="#i-caret"/></svg></button>
                        <button class="tool" aria-label="层"><svg><use href="#i-layers"/></svg></button>
                        <span class="grip wide"><b></b><b></b><b></b><b></b></span>
                        <button class="tool" aria-label="全部展开"><svg><use href="#i-expand"/></svg></button>
                        <button class="tool" aria-label="全部收起"><svg><use href="#i-collapse"/></svg></button>
                        <span class="sep"></span>
                        <button class="tool pressed" aria-label="显示层"><svg><use href="#i-layereye"/></svg></button>
                        <button class="tool pressed" aria-label="层对象"><svg><use href="#i-layerbox"/></svg></button>
                        <button class="chev spaced" aria-label="更多"><svg><use href="#i-chevrons"/></svg></button>
                        <button class="tool" aria-label="层列表"><svg><use href="#i-layerlist"/></svg></button>
                        <button class="tool" aria-label="设置"><svg><use href="#i-doc"/></svg></button>
                    </div>
                    <div class="picker">
                        <button aria-label="选择" disabled><svg><use href="#i-pick"/></svg></button>
                        <select aria-label="活动模型" disabled><option>PRT0001.PRT</option></select>
                        <span class="picker-drop"><i class="caret"></i></span>
                    </div>
                </div>
            </aside>

            <!-- Graphics area -->
            <main class="viewport">
                <svg class="model" viewBox="0 0 1923 1410">
                    <defs>
                        <linearGradient id="legV" gradientUnits="userSpaceOnUse" x1="0" y1="0" x2="705" y2="0">
                            <stop offset=".305" stop-color="#8b96a3"/><stop offset=".34" stop-color="#97a3b2"/><stop offset=".44" stop-color="#a2afbf"/><stop offset=".56" stop-color="#a4b1c2"/><stop offset=".66" stop-color="#96a3b1"/><stop offset=".77" stop-color="#828d9a"/><stop offset=".87" stop-color="#6a737f"/><stop offset=".95" stop-color="#585f6a"/><stop offset="1" stop-color="#555b66"/>
                        </linearGradient>
                        <linearGradient id="legH" gradientUnits="userSpaceOnUse" x1="0" y1="0" x2="0" y2="705">
                            <stop offset=".305" stop-color="#87929f"/><stop offset=".36" stop-color="#94a0af"/><stop offset=".46" stop-color="#9eabbc"/><stop offset=".56" stop-color="#a0adbe"/><stop offset=".66" stop-color="#94a1af"/><stop offset=".77" stop-color="#818c99"/><stop offset=".87" stop-color="#6a737f"/><stop offset=".95" stop-color="#585f6a"/><stop offset="1" stop-color="#555b66"/>
                        </linearGradient>
                        <radialGradient id="bend" gradientUnits="userSpaceOnUse" cx="0" cy="0" r="705">
                            <stop offset=".305" stop-color="#8b96a3"/><stop offset=".35" stop-color="#97a3b2"/><stop offset=".45" stop-color="#a0adbd"/><stop offset=".56" stop-color="#a2afc0"/><stop offset=".66" stop-color="#95a2b0"/><stop offset=".77" stop-color="#818c99"/><stop offset=".87" stop-color="#6a737f"/><stop offset=".95" stop-color="#585f6a"/><stop offset="1" stop-color="#555b66"/>
                        </radialGradient>
                        <linearGradient id="mouthTop" x1="0" x2="1"><stop offset="0" stop-color="#77707b"/><stop offset=".4" stop-color="#9299a9"/><stop offset="1" stop-color="#aab5c6"/></linearGradient>
                        <linearGradient id="mouthLeft" x1="0" x2="0" y1="0" y2="1"><stop offset="0" stop-color="#6d6c77"/><stop offset=".4" stop-color="#8b92a2"/><stop offset="1" stop-color="#a3adbe"/></linearGradient>
                        <filter id="wide" x="-60%" y="-60%" width="220%" height="220%"><feGaussianBlur stdDeviation="45"/></filter>
                        <filter id="soft" x="-50%" y="-50%" width="200%" height="200%"><feGaussianBlur stdDeviation="20"/></filter>
                        <filter id="glow" x="-50%" y="-50%" width="200%" height="200%"><feGaussianBlur stdDeviation="12"/></filter>
                        <clipPath id="pipe"><path d="M215 -482H705V0A705 705 0 0 1 0 705H-488V215H0A215 215 0 0 0 215 0Z"/></clipPath>
                    </defs>

                    <!-- Datum planes -->
                    <path d="M153 68L1357 125L1289 1330L86 1273Z" fill="#e1e1e2"/>
                    <path d="M1070 79L1138 149L1070 1355L1001 1285ZM64 986L1269 1043L1336 1110L131 1056Z" fill="#d9d8de"/>

                    <!-- Pipe -->
                    <g transform="translate(618 583) rotate(2.7)">
                        <path d="M215 -482H705V2H215Z" fill="url(#legV)"/>
                        <path d="M-488 215H2V705H-488Z" fill="url(#legH)"/>
                        <path d="M215 0H705A705 705 0 0 1 0 705V215A215 215 0 0 0 215 0Z" fill="url(#bend)"/>
                        <g clip-path="url(#pipe)">
                            <path d="M330 60A335 335 0 0 1 60 330" fill="none" stroke="#bccada" stroke-width="110" opacity=".6" filter="url(#wide)"/>
                            <path d="M376 60Q370 320 90 378Q290 240 376 60Z" fill="#dbe7f5" opacity=".9" filter="url(#soft)"/>
                            <path d="M350 140Q335 290 180 338Q255 225 350 140Z" fill="#fff" stroke="#fff" stroke-width="8" filter="url(#glow)"/>
                        </g>
                        <ellipse cx="460" cy="-482" rx="244" ry="22" fill="url(#mouthTop)" stroke="#111417" stroke-width="5"/>
                        <ellipse cx="-488" cy="460" rx="23" ry="243" fill="url(#mouthLeft)" stroke="#111417" stroke-width="5"/>
                    </g>

                    <!-- Plane outlines -->
                    <g fill="none" stroke="#765459" stroke-width="3">
                        <path d="M153 68L1357 125L1289 1330L86 1273Z"/>
                        <path d="M1070 79L1138 149L1070 1355L1001 1285Z"/>
                        <path d="M64 986L1269 1043L1336 1110L131 1056Z"/>
                    </g>
                    <path d="M1102 123V142M108 1021H130" stroke="#23a7cf" stroke-width="4"/>
                    <path d="M720 700L812 704" stroke="#e04848" stroke-width="3"/>
                    <path d="M718 704L715 792" stroke="#4ce6f5" stroke-width="4"/>
                    <circle cx="812" cy="704" r="6" fill="#d93a3f"/>
                    <circle cx="729" cy="708" r="9" fill="#35e83a"/>
                    <circle cx="715" cy="792" r="8" fill="#3feaf7"/>
                    <g class="plane-label">
                        <text x="1354" y="126">TOP</text>
                        <text x="131" y="1056">FRONT</text>
                        <text x="998" y="1284">RIGHT</text>
                    </g>
                </svg>

                <div class="view-tools">
                    <button class="tool" aria-label="重新调整"><svg><use href="#i-zoomfit"/></svg></button>
                    <button class="tool" aria-label="放大"><svg><use href="#i-zoomin"/></svg></button>
                    <button class="tool" aria-label="缩小"><svg><use href="#i-zoomout"/></svg></button>
                    <button class="tool" aria-label="重画"><svg><use href="#i-repaint"/></svg></button>
                    <button class="tool more" aria-label="渲染"><svg><use href="#i-render"/></svg><svg class="corner"><use href="#i-corner"/></svg></button>
                    <button class="tool more" aria-label="显示样式"><svg><use href="#i-shade"/></svg><svg class="corner"><use href="#i-corner"/></svg></button>
                    <button class="tool more" aria-label="已保存方向"><svg><use href="#i-saved"/></svg><svg class="corner"><use href="#i-corner"/></svg></button>
                    <button class="tool" aria-label="视图管理器"><svg><use href="#i-camera"/></svg></button>
                    <button class="tool" aria-label="视图法向"><svg><use href="#i-boxleft"/></svg></button>
                    <button class="tool" aria-label="视图方向"><svg><use href="#i-boxboth"/></svg></button>
                    <button class="tool" aria-label="透视图"><svg><use href="#i-persp"/></svg></button>
                    <button class="tool more" aria-label="剖面"><svg><use href="#i-section"/></svg><svg class="corner"><use href="#i-corner"/></svg></button>
                    <button class="tool more" aria-label="基准显示"><svg><use href="#i-datum"/></svg><svg class="corner"><use href="#i-corner"/></svg></button>
                    <button class="tool pressed" aria-label="平面显示"><svg><use href="#i-planeeye"/></svg></button>
                    <button class="tool" aria-label="轴显示"><svg><use href="#i-axiseye"/></svg></button>
                    <button class="tool" aria-label="点显示"><svg><use href="#i-pointeye"/></svg></button>
                    <button class="tool" aria-label="坐标系显示"><svg><use href="#i-csys"/></svg></button>
                </div>

                <!-- Forum logo -->
                <div class="logo">
                    <p class="logo-name"><span class="fire">野火</span><span>论坛</span></p>
                    <p class="logo-url">www.proewildfire.cn</p>
                    <svg class="flame" viewBox="0 0 17 42"><path d="M4 0C15 8 19 18 15 29C13 36 8 38 5 42L0 39C6 34 8 29 6 24C5 17 2 13 1 10C6 13 8 17 9 20C11 13 9 6 4 0Z" fill="#fa6432"/></svg>
                </div>
            </main>
        </div>
    </div>

</body>
</html>
```
FILE: styles.css
```
* {
    box-sizing: border-box;
}

body {
    margin: 0;
    font-family: "Open Sans", "Noto Sans CJK SC", sans-serif;
    font-size: 18px;
    line-height: 24px;
    color: #3c3e40;
    background: #e9eaee;
}

button {
    border: none;
    padding: 0;
    background: none;
    font: inherit;
    color: inherit;
    display: flex;
    align-items: center;
    justify-content: center;
    flex-shrink: 0;
}

svg {
    width: 24px;
    height: 24px;
    flex-shrink: 0;
    overflow: visible;
}

symbol {
    overflow: visible;
}

.sprite {
    position: absolute;
    width: 0;
    height: 0;
}

.app {
    height: 100vh;
    display: flex;
    flex-direction: column;
    overflow: hidden;
}

.caret {
    border: 5px solid transparent;
    border-top: 6px solid #6a6b6c;
    border-bottom: none;
}

.off {
    color: #adb0b2;
}

.off .caret,
.off.drop .caret {
    border-top-color: #aeb1b3;
}

/* Ribbon */
.ribbon {
    display: flex;
    height: 91px;
    background: #f8fafc;
    border-bottom: 1px solid #abb9b9;
    overflow: hidden;
    flex-shrink: 0;
    font-weight: 300;
}

.group {
    display: flex;
    flex-direction: column;
    justify-content: space-between;
    height: 88px;
    padding: 0 10px;
    border-right: 1px solid #a9abad;
    flex-shrink: 0;
}

.group-data { min-width: 159px; }
.group-body-ops { min-width: 167px; }
.group-datum { min-width: 264px; }
.group-eng { min-width: 225px; }
.group-edit { min-width: 420px; }

.group-body {
    display: flex;
    align-items: flex-start;
    gap: 12px;
}

.group-body.spread {
    gap: 30px;
}

.starts-big {
    padding-left: 6px;
}

.big {
    flex-direction: column;
    gap: 9px;
    margin-top: -4px;
    margin-right: 6px;
}

.big.last {
    margin-right: 0;
}

.cmd {
    gap: 6px;
    height: 24px;
    margin-top: 16px;
}

.cmd .caret {
    margin-left: 5px;
}

.group-title {
    gap: 6px;
    height: 32px;
}

/* Toolbars */
.tool {
    width: 36px;
    height: 36px;
}

.pressed {
    background: #dfe1e3;
    border: 1px solid #a9adb0;
}

.pressed + .pressed {
    border-left: none;
}

.drop {
    width: 21px;
    height: 36px;
}

.quickbar {
    display: flex;
    align-items: center;
    height: 36px;
    background: #f8fafc;
    border-bottom: 1px solid #abb9b9;
    flex-shrink: 0;
}

.quick-sep {
    width: 1px;
    height: 36px;
    background: #abb0b3;
}

.dim {
    font-weight: bold;
    font-size: 20px;
    color: #555759;
}

.workspace {
    display: flex;
    flex: 1;
    min-height: 0;
}

/* Sidebar */
.sidebar {
    display: flex;
    flex-direction: column;
    width: 389px;
    flex-shrink: 0;
    background: #f8fafc;
    border-right: 4px solid #dadfdf;
}

.tabs {
    display: flex;
    height: 38px;
    background: #dadfdf;
    margin-right: -4px;
}

.tab {
    width: 44px;
}

.tab.active {
    width: 47px;
    padding-left: 5px;
    background: #f8fafc;
}

.panel-tools {
    display: flex;
    align-items: center;
    height: 48px;
    padding-left: 18px;
}

.tiny {
    width: 18px;
}

.tiny svg {
    width: 22px;
    height: 22px;
}

.grip {
    display: flex;
    flex-direction: column;
    gap: 2px;
    margin-right: 28px;
}

.grip.wide {
    margin-left: 4px;
}

.grip b {
    width: 4px;
    height: 4px;
    border-radius: 50%;
    background: #c3c5c7;
}

.sep {
    width: 1px;
    height: 36px;
    margin: 0 6px;
    background: #a9adb0;
}

.chev {
    width: 32px;
}

.chev.spaced {
    margin-left: 8px;
}

.search {
    display: flex;
    align-items: center;
    height: 42px;
    padding-left: 18px;
}

.search label {
    display: flex;
    margin-right: 6px;
}

.search-box {
    display: flex;
    align-items: center;
    width: 266px;
    height: 42px;
    padding-right: 2px;
    background: #fff;
    border: 1px solid #a3adaf;
}

.search-box input {
    flex: 1;
    min-width: 0;
    height: 100%;
    border: none;
    outline: none;
    background: none;
    font: inherit;
    padding: 0 10px;
}

.search .drop {
    margin: 0 3px;
}

.tree-wrap {
    flex: 1;
    min-height: 0;
    padding-top: 8px;
}

.tree {
    list-style: none;
    margin: 0;
    padding: 0 0 0 13px;
    font-weight: 300;
}

.tree li {
    display: flex;
    align-items: center;
    height: 30px;
}

.tree .name {
    font-size: 19px;
}

.tree .line {
    width: 30px;
    height: 30px;
}

.tree .icon {
    margin: 0 6px 0 3px;
}

.tree .icon:first-child {
    margin-left: 4px;
}

.insert-bar {
    height: 10px;
    margin: 5px 7px 0 16px;
    border: solid #68bd50;
    border-width: 0 2px;
    background: linear-gradient(#f8fafc 3px, #a8e296 3px, #a8e296 5px, #68bd50 5px, #68bd50 7px, #e3e3e3 7px);
}

.suppressed {
    margin: 0 7px 0 16px;
    padding: 6px 0 0;
    background: #e3e3e3;
    color: #7b7c7d;
}

.suppressed .line {
    margin-left: -3px;
}

.suppressed .mark {
    width: 6px;
    height: 8px;
    margin-right: 3px;
    margin-bottom: 12px;
    background: #858585;
}

.layers {
    height: 73px;
    overflow: hidden;
    flex-shrink: 0;
}

.splitter {
    height: 4px;
    margin: 0 7px 0 12px;
    background: #dadfdf;
}

.picker {
    display: flex;
    height: 42px;
    margin: 0 7px 0 12px;
    border: 1px solid #c6cacc;
}

.picker button {
    width: 36px;
    background: #e9ebed;
    border-right: 1px solid #c6cacc;
}

.picker select {
    flex: 1;
    appearance: none;
    border: none;
    padding: 0 0 6px 11px;
    background: #f8f8f9;
    font: inherit;
    font-size: 19px;
    font-weight: 300;
    color: #a0a2a3;
    opacity: 1;
}

.picker-drop {
    display: flex;
    justify-content: center;
    width: 23px;
    padding-top: 14px;
    border-left: 1px solid #c6cacc;
    background: #f8f8f9;
}

.picker-drop .caret {
    height: 6px;
    border-top-color: #9a9c9d;
}

/* Graphics area */
.viewport {
    flex: 1;
    position: relative;
    overflow: hidden;
    background: #e9eaee;
}

.model {
    position: absolute;
    top: 243px;
    right: 0;
    width: 641px;
    height: 470px;
}

.plane-label {
    font-family: "Liberation Sans", Arial, sans-serif;
    font-size: 45px;
    fill: #765459;
}

.view-tools {
    position: absolute;
    top: 7px;
    right: -21px;
    display: flex;
    align-items: center;
    gap: 2px;
    height: 46px;
    padding: 0 0 0 4px;
    background: #f8fafc;
    border: 1px solid #9fa3a7;
}

.view-tools .more {
    position: relative;
}

.view-tools .corner {
    position: absolute;
    right: 2px;
    bottom: 3px;
    width: 6px;
    height: 6px;
}

/* Logo */
.logo {
    position: absolute;
    right: 22px;
    bottom: 5px;
}

.logo p {
    margin: 0;
}

.logo-name {
    display: flex;
    gap: 6px;
    font-family: "Noto Sans CJK SC", sans-serif;
    font-size: 40px;
    font-style: italic;
    font-weight: 300;
    line-height: 44px;
    color: #111;
}

.logo-name .fire {
    color: #fa6432;
}

.logo-url {
    font-family: "Liberation Sans", Arial, sans-serif;
    font-size: 18px;
    font-style: italic;
    line-height: 20px;
    color: #949698;
}

.flame {
    position: absolute;
    left: 66px;
    top: -11px;
    width: 17px;
    height: 42px;
}
```
